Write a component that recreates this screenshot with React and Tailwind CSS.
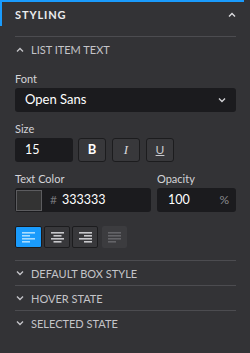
import React from "react";

const font = { fontFamily: "Lato, 'Open Sans', sans-serif" };

const Chevron = ({ up = false, className = "" }) => (
  <svg width="8" height="5" viewBox="0 0 8 5" className={className}>
    <polyline
      points={up ? "1,4.5 4,1.5 7,4.5" : "1,0.5 4,3.5 7,0.5"}
      fill="none"
      stroke="currentColor"
      strokeWidth="1.4"
    />
  </svg>
);

// lignes d'alignement : [x, largeur]
const alignLines = {
  left: [[0, 13], [0, 8], [0, 13], [0, 8]],
  center: [[0, 13], [2.5, 8], [0, 13], [2.5, 8]],
  right: [[0, 13], [5, 8], [0, 13], [5, 8]],
  justify: [[0, 13], [0, 13], [0, 13], [0, 8]],
};

const AlignIcon = ({ kind, color }) => (
  <svg width="13" height="11" viewBox="0 0 13 11">
    {alignLines[kind].map(([x, w], i) => (
      <rect key={i} x={x} y={i * 3} width={w} height="1.6" fill={color} />
    ))}
  </svg>
);

const SectionRow = ({ label, open = false }) => (
  <div className="h-[24px] flex items-center text-[#c4c4c8]">
    <Chevron up={open} className="ml-[1px] mr-[7px]" />
    <span className="text-[11px] uppercase leading-none">{label}</span>
  </div>
);

const Divider = () => <div className="h-px bg-[#4c4c50]" />;

export default function App() {
  return (
    <div className="w-[250px] h-[353px] bg-[#333336] overflow-hidden" style={font}>
      <div className="h-[2px] w-[244px] bg-[#1a9bfc]" />
      <div className="h-[24px] border-l-2 border-[#1a9bfc] pl-[13px] pr-[14px] flex items-center justify-between">
        <span className="text-[11px] font-bold tracking-[0.08em] text-[#ececee] leading-none">
          STYLING
        </span>
        <Chevron up className="text-[#dcdcdf]" />
      </div>

      <div className="px-[15px] pr-[14px] pt-[10px]">
        <Divider />
        <SectionRow label="List item text" open />

        <div className="mt-[10px] text-[11px] text-[#d4d4d8] h-[16px] leading-[16px] mb-px">
          Font
        </div>
        <div className="h-[24px] bg-[#1b1b1e] rounded-[3px] flex items-center justify-between pl-[10px] pr-[10px]">
          <span className="text-[13px] text-white">Open Sans</span>
          <Chevron className="text-[#d0d0d4]" />
        </div>

        <div className="mt-[9px] text-[11px] text-[#d4d4d8] h-[16px] leading-[16px] mb-px">
          Size
        </div>
        <div className="flex gap-[6px] h-[24px]">
          <div className="w-[58px] bg-[#1b1b1e] rounded-[3px] flex items-center pl-[10px]">
            <span className="text-[12.5px] text-white">15</span>
          </div>
          <div className="ml-[-1px] w-[28px] border border-[#1c1c1e] bg-[#38383b] rounded-[3px] flex items-center justify-center">
            <span className="text-[13px] font-bold text-white">B</span>
          </div>
          <div className="w-[28px] border border-[#1c1c1e] bg-[#38383b] rounded-[3px] flex items-center justify-center">
            <span className="text-[13px] italic text-[#d8d8dc]" style={{ fontFamily: "'Liberation Serif', serif" }}>I</span>
          </div>
          <div className="w-[28px] border border-[#1c1c1e] bg-[#38383b] rounded-[3px] flex items-center justify-center">
            <span className="text-[12px] underline text-[#c8c8cc]">U</span>
          </div>
        </div>

        <div className="mt-[9px] flex h-[16px] leading-[16px] mb-px text-[11px] text-[#d4d4d8]">
          <span className="w-[142px]">Text Color</span>
          <span>Opacity</span>
        </div>
        <div className="flex gap-[6px] h-[24px]">
          <div className="w-[136px] bg-[#1b1b1e] rounded-[3px] flex items-center pl-px">
            <div className="w-[26px] h-[21px] bg-[#333333] border border-[#5c5c5f]" />
            <span className="ml-[8px] text-[12px] text-[#727276]">#</span>
            <span className="ml-[5px] text-[12.5px] text-white">333333</span>
          </div>
          <div className="flex-1 bg-[#1b1b1e] rounded-[3px] flex items-center justify-between pl-[11px] pr-[7px]">
            <span className="text-[12.5px] text-white">100</span>
            <span className="text-[12px] text-[#8a8a8e]">%</span>
          </div>
        </div>

        <div className="mt-[14px] flex h-[22px]">
          <div className="w-[27px] bg-[#1a9bfc] border border-[#1a1a1c] rounded-[2px] flex items-center justify-center">
            <AlignIcon kind="left" color="#a8dcff" />
          </div>
          <div className="ml-[2px] w-[26px] bg-[#38383b] border border-[#1c1c1e] rounded-[2px] flex items-center justify-center">
            <AlignIcon kind="center" color="#c8c8cc" />
          </div>
          <div className="ml-[2px] w-[26px] bg-[#38383b] border border-[#1c1c1e] rounded-[2px] flex items-center justify-center">
            <AlignIcon kind="right" color="#c8c8cc" />
          </div>
          <div className="ml-[4px] w-[25px] bg-[#3c3c3f] rounded-[2px] flex items-center justify-center">
            <AlignIcon kind="justify" color="#646468" />
          </div>
        </div>

        <div className="mt-[12px]">
          <Divider />
          <SectionRow label="Default box style" />
          <Divider />
          <SectionRow label="Hover state" />
          <Divider />
          <SectionRow label="Selected state" />
        </div>
      </div>
    </div>
  );
}
